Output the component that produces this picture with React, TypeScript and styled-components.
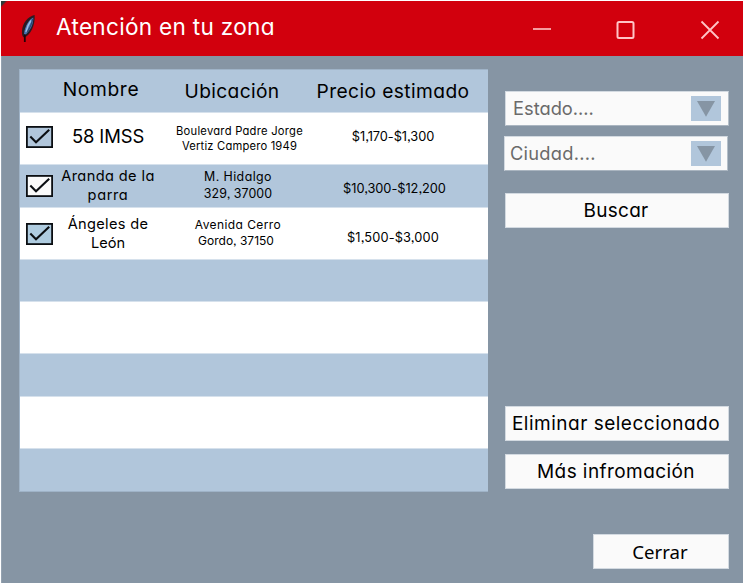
import React from 'react';
import styled, { createGlobalStyle } from 'styled-components';

const GlobalStyle = createGlobalStyle`
  body {
    margin: 0;
    background: #fff;
    font-family: Inter, "Noto Sans", sans-serif;
    font-feature-settings: "cv11", "ss03";
    color: #000;
  }
  *, *::before, *::after { box-sizing: border-box; }
`;

const Window = styled.div`
  width: 743px;
  height: 583px;
  padding: 1px 0 0 1px;
  display: flex;
  flex-direction: column;
  overflow: hidden;
`;

const TitleBar = styled.header`
  height: 55px;
  flex: none;
  background: linear-gradient(135deg, #2c3a36 0 3px, #d2000d 5px);
  display: flex;
  align-items: center;
  padding: 0 23px 0 17px;
`;

const Title = styled.h1`
  flex: 1;
  margin: -3px 0 0 17px;
  font-size: 22.6px;
  font-weight: 400;
  letter-spacing: 0.29px;
  line-height: 30px;
  color: #fff;
  white-space: nowrap;
`;

const WindowControls = styled.div`
  display: flex;
  align-items: center;
  gap: 64px;
  padding-top: 3px;

  svg { display: block; }
`;

const Body = styled.main`
  flex: 1;
  min-height: 0;
  background: #8695a4;
  border-left: 1px solid #94a2b0;
  display: flex;
  align-items: flex-start;
  padding: 13px 14px 14px 17px;
`;

const Table = styled.section`
  width: 469px;
  flex: none;
  border: 1px solid #9fb3c7;
  border-right: 0;
`;

const Row = styled.div<{ $height: number; $blue?: boolean }>`
  height: ${(p) => p.$height}px;
  display: grid;
  grid-template-columns: 36px 104px 156px 154px;
  background: ${(p) => (p.$blue ? '#b1c6db' : '#fff')};
  border-bottom: 1px solid #d6e1ec;

  &:last-child { border-bottom: 0; }
`;

const CheckCell = styled.div<{ $top: number }>`
  padding: ${(p) => p.$top}px 0 0 6px;

  svg { display: block; }
`;

/* $top is the offset of the first line box, $nudge moves the centre of the text. */
const Cell = styled.div<{ $top: number; $size: number; $line: number; $nudge?: number }>`
  padding-top: ${(p) => p.$top}px;
  padding-left: ${(p) => Math.max(0, (p.$nudge ?? 0) * 2)}px;
  padding-right: ${(p) => Math.max(0, (p.$nudge ?? 0) * -2)}px;
  font-size: ${(p) => p.$size}px;
  line-height: ${(p) => p.$line}px;
  display: flex;
  flex-direction: column;
  align-items: center;
  white-space: nowrap;
`;

const Line = styled.span<{ $track: number; $shift?: number }>`
  letter-spacing: ${(p) => p.$track}px;
  margin-left: ${(p) => p.$shift ?? 0}px;
`;

const Sidebar = styled.aside`
  flex: 1;
  height: 500px;
  display: flex;
  flex-direction: column;
  align-items: flex-end;
  padding-top: 22px;
`;

const Select = styled.div<{ $inset: number; $end: number; $pad: number; $track?: number }>`
  width: 224px;
  height: 35px;
  flex: none;
  margin-right: ${(p) => p.$inset}px;
  padding: 0 ${(p) => p.$end}px 0 ${(p) => p.$pad}px;
  background: #fafafa;
  border: 1px solid #d3dae1;
  border-right-color: #b4bfc9;
  border-bottom-color: #aab5c0;
  display: flex;
  align-items: center;
  justify-content: space-between;
  color: #6a6a6a;
  font-size: 18.3px;
  letter-spacing: ${(p) => p.$track ?? 0}px;
  line-height: 33px;
`;

const Arrow = styled.span`
  width: 30px;
  height: 25px;
  background: #b1c6db;
  display: flex;
  justify-content: center;
  align-items: center;

  svg { display: block; }
`;

const Filters = styled.div`
  display: flex;
  flex-direction: column;
  align-items: flex-end;
  gap: 10px;
`;

const Button = styled.button<{ $width?: number; $track?: number; $gap: number; $open?: boolean }>`
  width: ${(p) => p.$width ?? 224}px;
  height: 35px;
  flex: none;
  margin: ${(p) => p.$gap}px 0 0;
  padding: 0 2px 0 0;
  background: #fafafa;
  border: 1px solid #d3dae1;
  border-radius: 0;
  color: #000;
  font-family: ${(p) => (p.$open ? '"Noto Sans", "Open Sans"' : 'Inter')}, sans-serif;
  font-feature-settings: "cv11", "ss03";
  font-size: ${(p) => (p.$open ? 18.6 : 19)}px;
  font-weight: 400;
  letter-spacing: ${(p) => p.$track ?? 0}px;
  line-height: 33px;
  text-align: center;
  white-space: nowrap;
`;

const FeatherIcon = () => (
  <svg width="21" height="34" viewBox="0 0 21 34">
    <path d="M16.6 3C10 4.500 4.500 11 4 19c-.2 3 .3 6.500 2.600 6.300C12 23 17.500 14 16.600 3Z" fill="#2a1a22" />
    <path d="M15.300 5.500C11 7.500 6.800 14 6 22l1.200.8C11.500 19.500 15.600 13 15.300 5.500Z" fill="#4675b4" />
    <path d="M13 8.500c-2.600 3.500-4 7-5 11.500" stroke="#9dbfe3" strokeWidth="1.5" fill="none" />
    <path d="M14.800 7c-1 5-3 9.500-6 13.500" stroke="#2c466f" strokeWidth="1.2" fill="none" />
    <path d="M6.800 22.500V30" stroke="#250008" strokeWidth="1.8" />
  </svg>
);

const Check = ({ fill }: { fill: string }) => (
  <svg width="27" height="22" viewBox="0 0 27 22">
    <rect x="0.9" y="0.9" width="25.2" height="20.2" fill={fill} stroke="#0b0e12" strokeWidth="1.8" />
    <path d="M4.3 10.6 10 16.2 23.2 3.7" fill="none" stroke="#0b0e12" strokeWidth="2.1" />
  </svg>
);

const Triangle = () => (
  <Arrow>
    <svg width="18" height="16" viewBox="0 0 18 16">
      <path d="M0 0h18L9 15.7Z" fill="#8695a4" />
    </svg>
  </Arrow>
);

export default function App() {
  return (
    <>
      <GlobalStyle />
      <Window>
        <TitleBar>
          <FeatherIcon />
          <Title>Atención en tu zona</Title>
          <WindowControls>
            <svg width="20" height="20" viewBox="0 0 20 20">
              <path d="M1 9h18" stroke="#ffc4c6" strokeWidth="1.6" />
            </svg>
            <svg width="20" height="20" viewBox="0 0 20 20">
              <rect x="1.500" y="2" width="16" height="16" rx="1.500" fill="none" stroke="#ffc4c6" strokeWidth="2" />
            </svg>
            <svg width="20" height="20" viewBox="0 0 20 20">
              <path d="M1.500 1.500l17 17M18.500 1.500l-17 17" stroke="#ffc4c6" strokeWidth="1.8" />
            </svg>
          </WindowControls>
        </TitleBar>
        <Body>
          <Table>
            <Row $height={43} $blue>
              <span />
              <Cell $top={7} $size={19.2} $line={24} $nudge={-7}><Line $track={0.65}>Nombre</Line></Cell>
              <Cell $top={9} $size={19.2} $line={24} $nudge={-6}><Line $track={0.34}>Ubicación</Line></Cell>
              <Cell $top={9} $size={19.2} $line={24}><Line $track={0.4}>Precio estimado</Line></Cell>
            </Row>
            <Row $height={52}>
              <CheckCell $top={13}><Check fill="#b1c6db" /></CheckCell>
              <Cell $top={11} $size={18.4} $line={24}><Line $track={-0.1}>58 IMSS</Line></Cell>
              <Cell $top={11.4} $size={11.2} $line={15} $nudge={1.5}>
                <Line $track={0.26}>Boulevard Padre Jorge</Line>
                <Line $track={0.19}>Vertiz Campero 1949</Line>
              </Cell>
              <Cell $top={14.4} $size={12.8} $line={20}><Line $track={-0.05}>$1,170-$1,300</Line></Cell>
            </Row>
            <Row $height={43} $blue>
              <CheckCell $top={9.5}><Check fill="#fafafa" /></CheckCell>
              <Cell $top={2} $size={14.6} $line={18.7}>
                <Line $track={0.38}>Aranda de la</Line>
                <Line $track={0.6}>parra</Line>
              </Cell>
              <Cell $top={3.2} $size={12.4} $line={17}>
                <Line $track={0.42}>M. Hidalgo</Line>
                <Line $track={0.08}>329, 37000</Line>
              </Cell>
              <Cell $top={14.4} $size={12.8} $line={20} $nudge={1.5}><Line $track={-0.03}>$10,300-$12,200</Line></Cell>
            </Row>
            <Row $height={52}>
              <CheckCell $top={15}><Check fill="#afcce0" /></CheckCell>
              <Cell $top={6.8} $size={14.6} $line={18.8}>
                <Line $track={0.33}>Ángeles de</Line>
                <Line $track={0}>León</Line>
              </Cell>
              <Cell $top={9} $size={12} $line={16}>
                <Line $track={0.42}>Avenida Cerro</Line>
                <Line $track={0} $shift={-4}>Gordo, 37150</Line>
              </Cell>
              <Cell $top={20.4} $size={12.8} $line={20}><Line $track={0.14}>$1,500-$3,000</Line></Cell>
            </Row>
            <Row $height={52 - 10} $blue />
            <Row $height={52} />
            <Row $height={43} $blue />
            <Row $height={52} />
            <Row $height={42} $blue />
          </Table>
          <Sidebar>
            <Filters>
              <Select $inset={0} $end={7} $pad={7}>Estado....<Triangle /></Select>
              <Select $inset={1} $end={6} $pad={5} $track={0.25}>Ciudad....<Triangle /></Select>
            </Filters>
            <Button $gap={22} $track={0.28}>Buscar</Button>
            <Button $gap={178} $track={0.5}>Eliminar seleccionado</Button>
            <Button $gap={13} $track={0.43}>Más infromación</Button>
            <Button $gap={45} $width={136} $open>Cerrar</Button>
          </Sidebar>
        </Body>
      </Window>
    </>
  );
}
